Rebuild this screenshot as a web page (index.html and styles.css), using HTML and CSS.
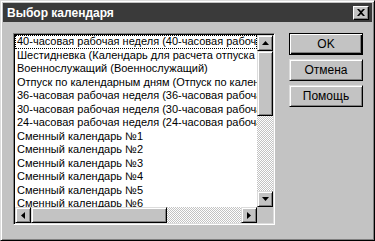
FILE: index.html
```html
<!DOCTYPE html>
<html lang="ru">
<head>
    <meta charset="UTF-8">
    <title>Выбор календаря</title>
    <link rel="stylesheet" href="styles.css">
</head>
<body>
	<div class="window">
		<div class="titlebar">
			<span class="title">Выбор календаря</span>
			<span class="close">
				<svg width="8" height="7" viewBox="0 0 8 7"><path d="M0 0h2l2 2 2-2h2L5 3.5 8 7H6L4 5 2 7H0l3-3.5z" fill="#000"/></svg>
			</span>
		</div>
		<div class="content">
			<div class="listbox">
				<div class="listMain">
					<ul class="items">
						<li class="focused">40-часовая рабочая неделя (40-часовая рабочая неделя)</li>
						<li>Шестидневка (Календарь для расчета отпуска по календарным дням)</li>
						<li>Военнослужащий (Военнослужащий)</li>
						<li>Отпуск по календарным дням (Отпуск по календарным дням)</li>
						<li>36-часовая рабочая неделя (36-часовая рабочая неделя)</li>
						<li>30-часовая рабочая неделя (30-часовая рабочая неделя)</li>
						<li>24-часовая рабочая неделя (24-часовая рабочая неделя)</li>
						<li>Сменный календарь №1</li>
						<li>Сменный календарь №2</li>
						<li>Сменный календарь №3</li>
						<li>Сменный календарь №4</li>
						<li>Сменный календарь №5</li>
						<li>Сменный календарь №6</li>
						<li>Сменный календарь №7</li>
					</ul>
					<div class="vscroll">
						<span class="sbtn"><svg width="7" height="4" viewBox="0 0 7 4"><path d="M3.5 0L7 4H0z" fill="#000"/></svg></span>
						<span class="vthumb"></span>
						<span class="track"></span>
						<span class="sbtn"><svg width="7" height="4" viewBox="0 0 7 4"><path d="M0 0h7L3.5 4z" fill="#000"/></svg></span>
					</div>
				</div>
				<div class="listBottom">
					<div class="hscroll">
						<span class="sbtn"><svg width="4" height="7" viewBox="0 0 4 7"><path d="M4 0v7L0 3.5z" fill="#000"/></svg></span>
						<span class="hthumb"></span>
						<span class="track"></span>
						<span class="sbtn"><svg width="4" height="7" viewBox="0 0 4 7"><path d="M0 0l4 3.5L0 7z" fill="#000"/></svg></span>
					</div>
					<span class="corner"></span>
				</div>
			</div>
			<div class="buttons">
				<div class="btn default">OK</div>
				<div class="btn">Отмена</div>
				<div class="btn">Помощь</div>
			</div>
		</div>
	</div>
</body>
</html>
```
FILE: styles.css
```css
body,html{
	margin: 0;
	padding: 0;
	background: #c3c3c3;
	font-family: "Liberation Sans", Arial, sans-serif;
}
.window{
	width: 375px;
	height: 241px;
	box-sizing: border-box;
	background: #c3c3c3;
	border: 1px solid;
	border-color: #dcdcdc #000 #000 #dcdcdc;
	box-shadow: inset 1px 1px 0 #fff, inset -1px -1px 0 #808080;
	padding: 2px;
}
.titlebar{
	height: 19px;
	background: #3a3a3a;
	display: flex;
	align-items: center;
	justify-content: space-between;
	padding: 0 3px 0 4px;
}
.title{
	color: #fff;
	font-weight: bold;
	font-size: 12px;
}
.close{
	width: 16px;
	height: 14px;
	box-sizing: border-box;
	background: #c3c3c3;
	border: 1px solid;
	border-color: #fff #000 #000 #fff;
	box-shadow: inset -1px -1px 0 #808080;
	display: flex;
	align-items: center;
	justify-content: center;
}
.content{
	display: flex;
	padding: 11px 0 0 10px;
	gap: 14px;
}
.listbox{
	width: 262px;
	height: 192px;
	box-sizing: border-box;
	border: 1px solid;
	border-color: #808080 #fff #fff #808080;
	box-shadow: inset 1px 1px 0 #000, inset -1px -1px 0 #dcdcdc;
	padding: 1px;
	background: #fff;
	display: flex;
	flex-direction: column;
}
.listMain{
	flex: 1;
	display: flex;
	min-height: 0;
}
.items{
	flex: 1;
	margin: 0;
	padding: 0;
	list-style: none;
	overflow: hidden;
	font-size: 11px;
}
.items li{
	height: 13.5px;
	line-height: 13px;
	white-space: nowrap;
	padding-left: 2px;
	color: #000;
}
.items li.focused{
	outline: 1px dotted #000;
	outline-offset: -1px;
}
.vscroll{
	width: 16px;
	display: flex;
	flex-direction: column;
}
.hscroll{
	flex: 1;
	display: flex;
}
.listBottom{
	height: 16px;
	display: flex;
}
.corner{
	width: 16px;
	background: #c3c3c3;
}
.sbtn,.vthumb,.hthumb,.btn{
	box-sizing: border-box;
	background: #c3c3c3;
	border: 1px solid;
	border-color: #dcdcdc #000 #000 #dcdcdc;
	box-shadow: inset 1px 1px 0 #fff, inset -1px -1px 0 #808080;
}
.sbtn{
	width: 16px;
	height: 16px;
	flex: none;
	display: flex;
	align-items: center;
	justify-content: center;
}
.vthumb{
	height: 65px;
	flex: none;
}
.hthumb{
	width: 136px;
	flex: none;
}
.track{
	flex: 1;
	background: repeating-conic-gradient(#fff 0 25%, #c3c3c3 0 50%) 0 0/2px 2px;
}
.buttons{
	display: flex;
	flex-direction: column;
	gap: 4px;
}
.btn{
	width: 74px;
	height: 22px;
	line-height: 20px;
	text-align: center;
	font-size: 12px;
	color: #000;
}
.btn.default{
	border: 1px solid #000;
	box-shadow: inset 1px 1px 0 #fff, inset -1px -1px 0 #000, inset -2px -2px 0 #808080;
}
```
